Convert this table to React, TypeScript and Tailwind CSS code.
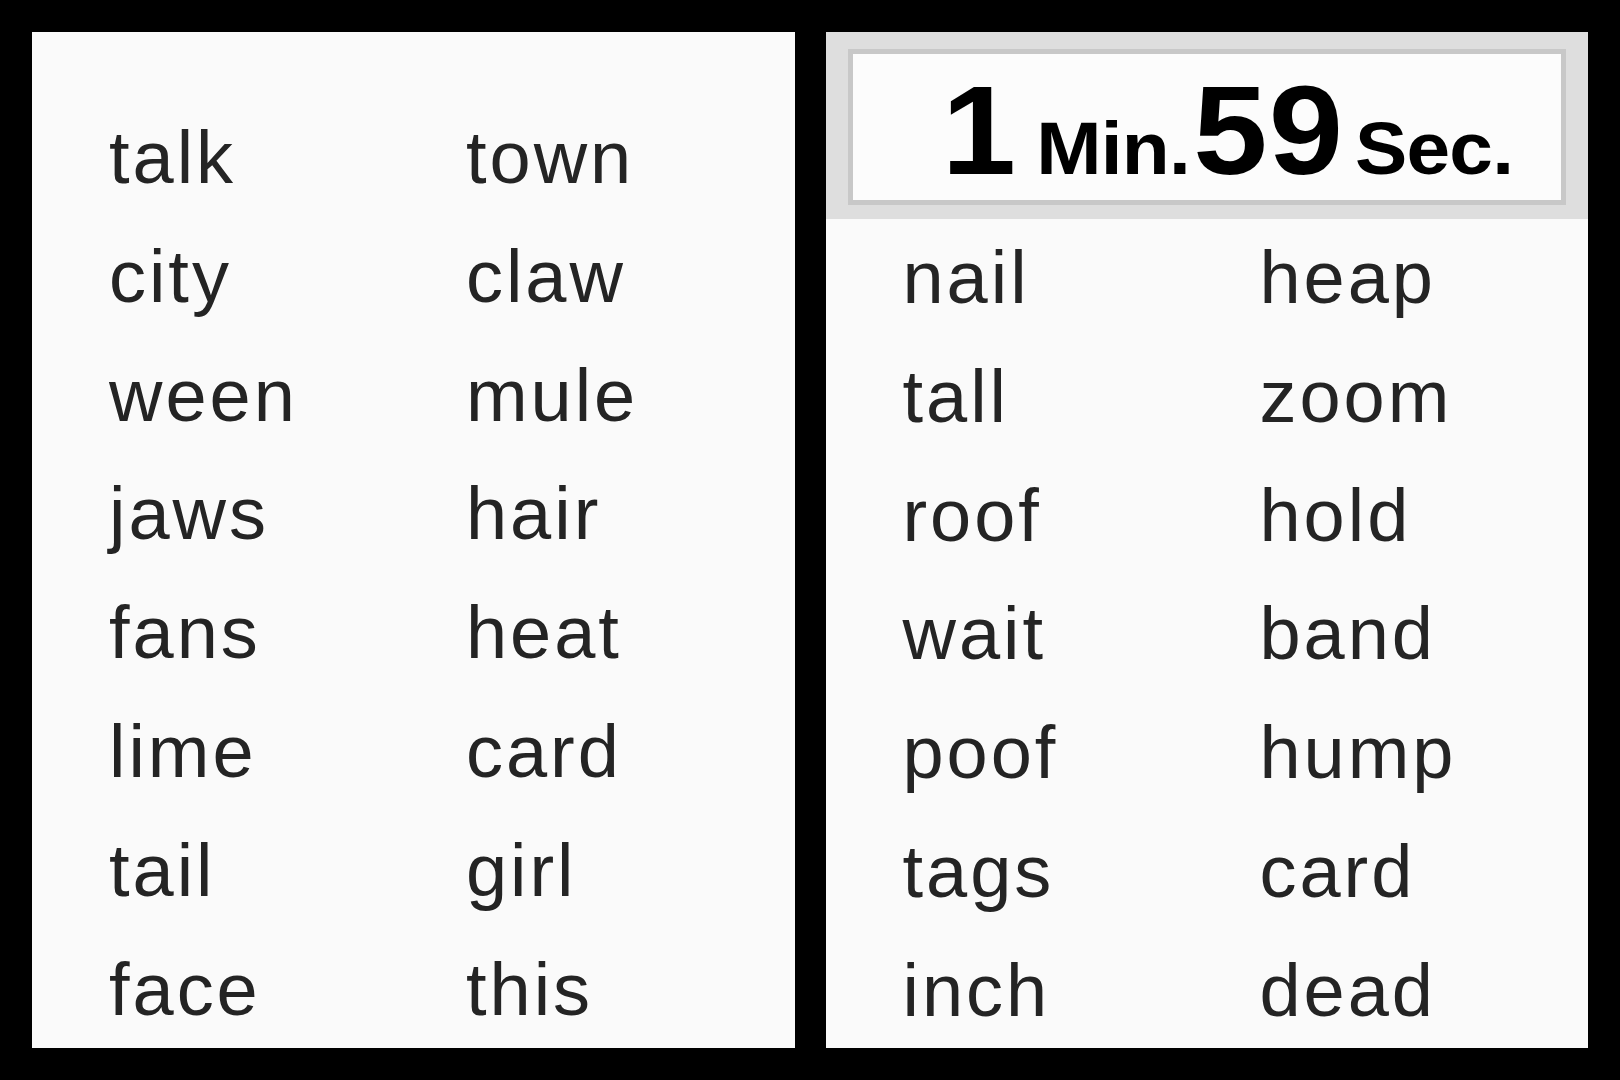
const leftWords = [
  ["talk", "town"],
  ["city", "claw"],
  ["ween", "mule"],
  ["jaws", "hair"],
  ["fans", "heat"],
  ["lime", "card"],
  ["tail", "girl"],
  ["face", "this"],
];

const rightWords = [
  ["nail", "heap"],
  ["tall", "zoom"],
  ["roof", "hold"],
  ["wait", "band"],
  ["poof", "hump"],
  ["tags", "card"],
  ["inch", "dead"],
];

const WordGrid = ({ words }: { words: string[][] }) => (
  <div className="grid grid-cols-[357px_1fr] pl-[77px] text-[74px] leading-[118.8px] tracking-[0.04em] text-[#242424]">
    {words.map(([a, b], i) => (
      <div key={i} className="contents">
        <span>{a}</span>
        <span>{b}</span>
      </div>
    ))}
  </div>
);

const Timer = () => (
  <div className="bg-[#dedede] px-[22px] pt-[17px] pb-[14px]">
    <div className="flex h-[156px] justify-center border-[5px] border-[#c8c8c8] bg-[#fcfcfc] pt-[14px] pl-[42px]">
      <div className="inline-flex scale-x-[1.06] items-baseline font-bold leading-none text-black">
        <span className="mr-[19px] text-[126px]">1</span>
        <span className="mr-[3px] text-[74px] tracking-[-0.01em]">Min.</span>
        <span className="mr-[10px] text-[126px] tracking-[0.01em]">59</span>
        <span className="text-[74px] tracking-[-0.01em]">Sec.</span>
      </div>
    </div>
  </div>
);

const App = () => {
  return (
    <div
      className="flex h-[1080px] gap-[31px] bg-black p-[32px]"
      style={{ fontFamily: '"Liberation Sans", Arial, sans-serif' }}
    >
      <section className="flex-1 overflow-hidden bg-[#fafafa] pt-[67px]">
        <WordGrid words={leftWords} />
      </section>

      <section className="flex-1 overflow-hidden bg-[#fafafa]">
        <Timer />
        <WordGrid words={rightWords} />
      </section>
    </div>
  );
};

export default App;
